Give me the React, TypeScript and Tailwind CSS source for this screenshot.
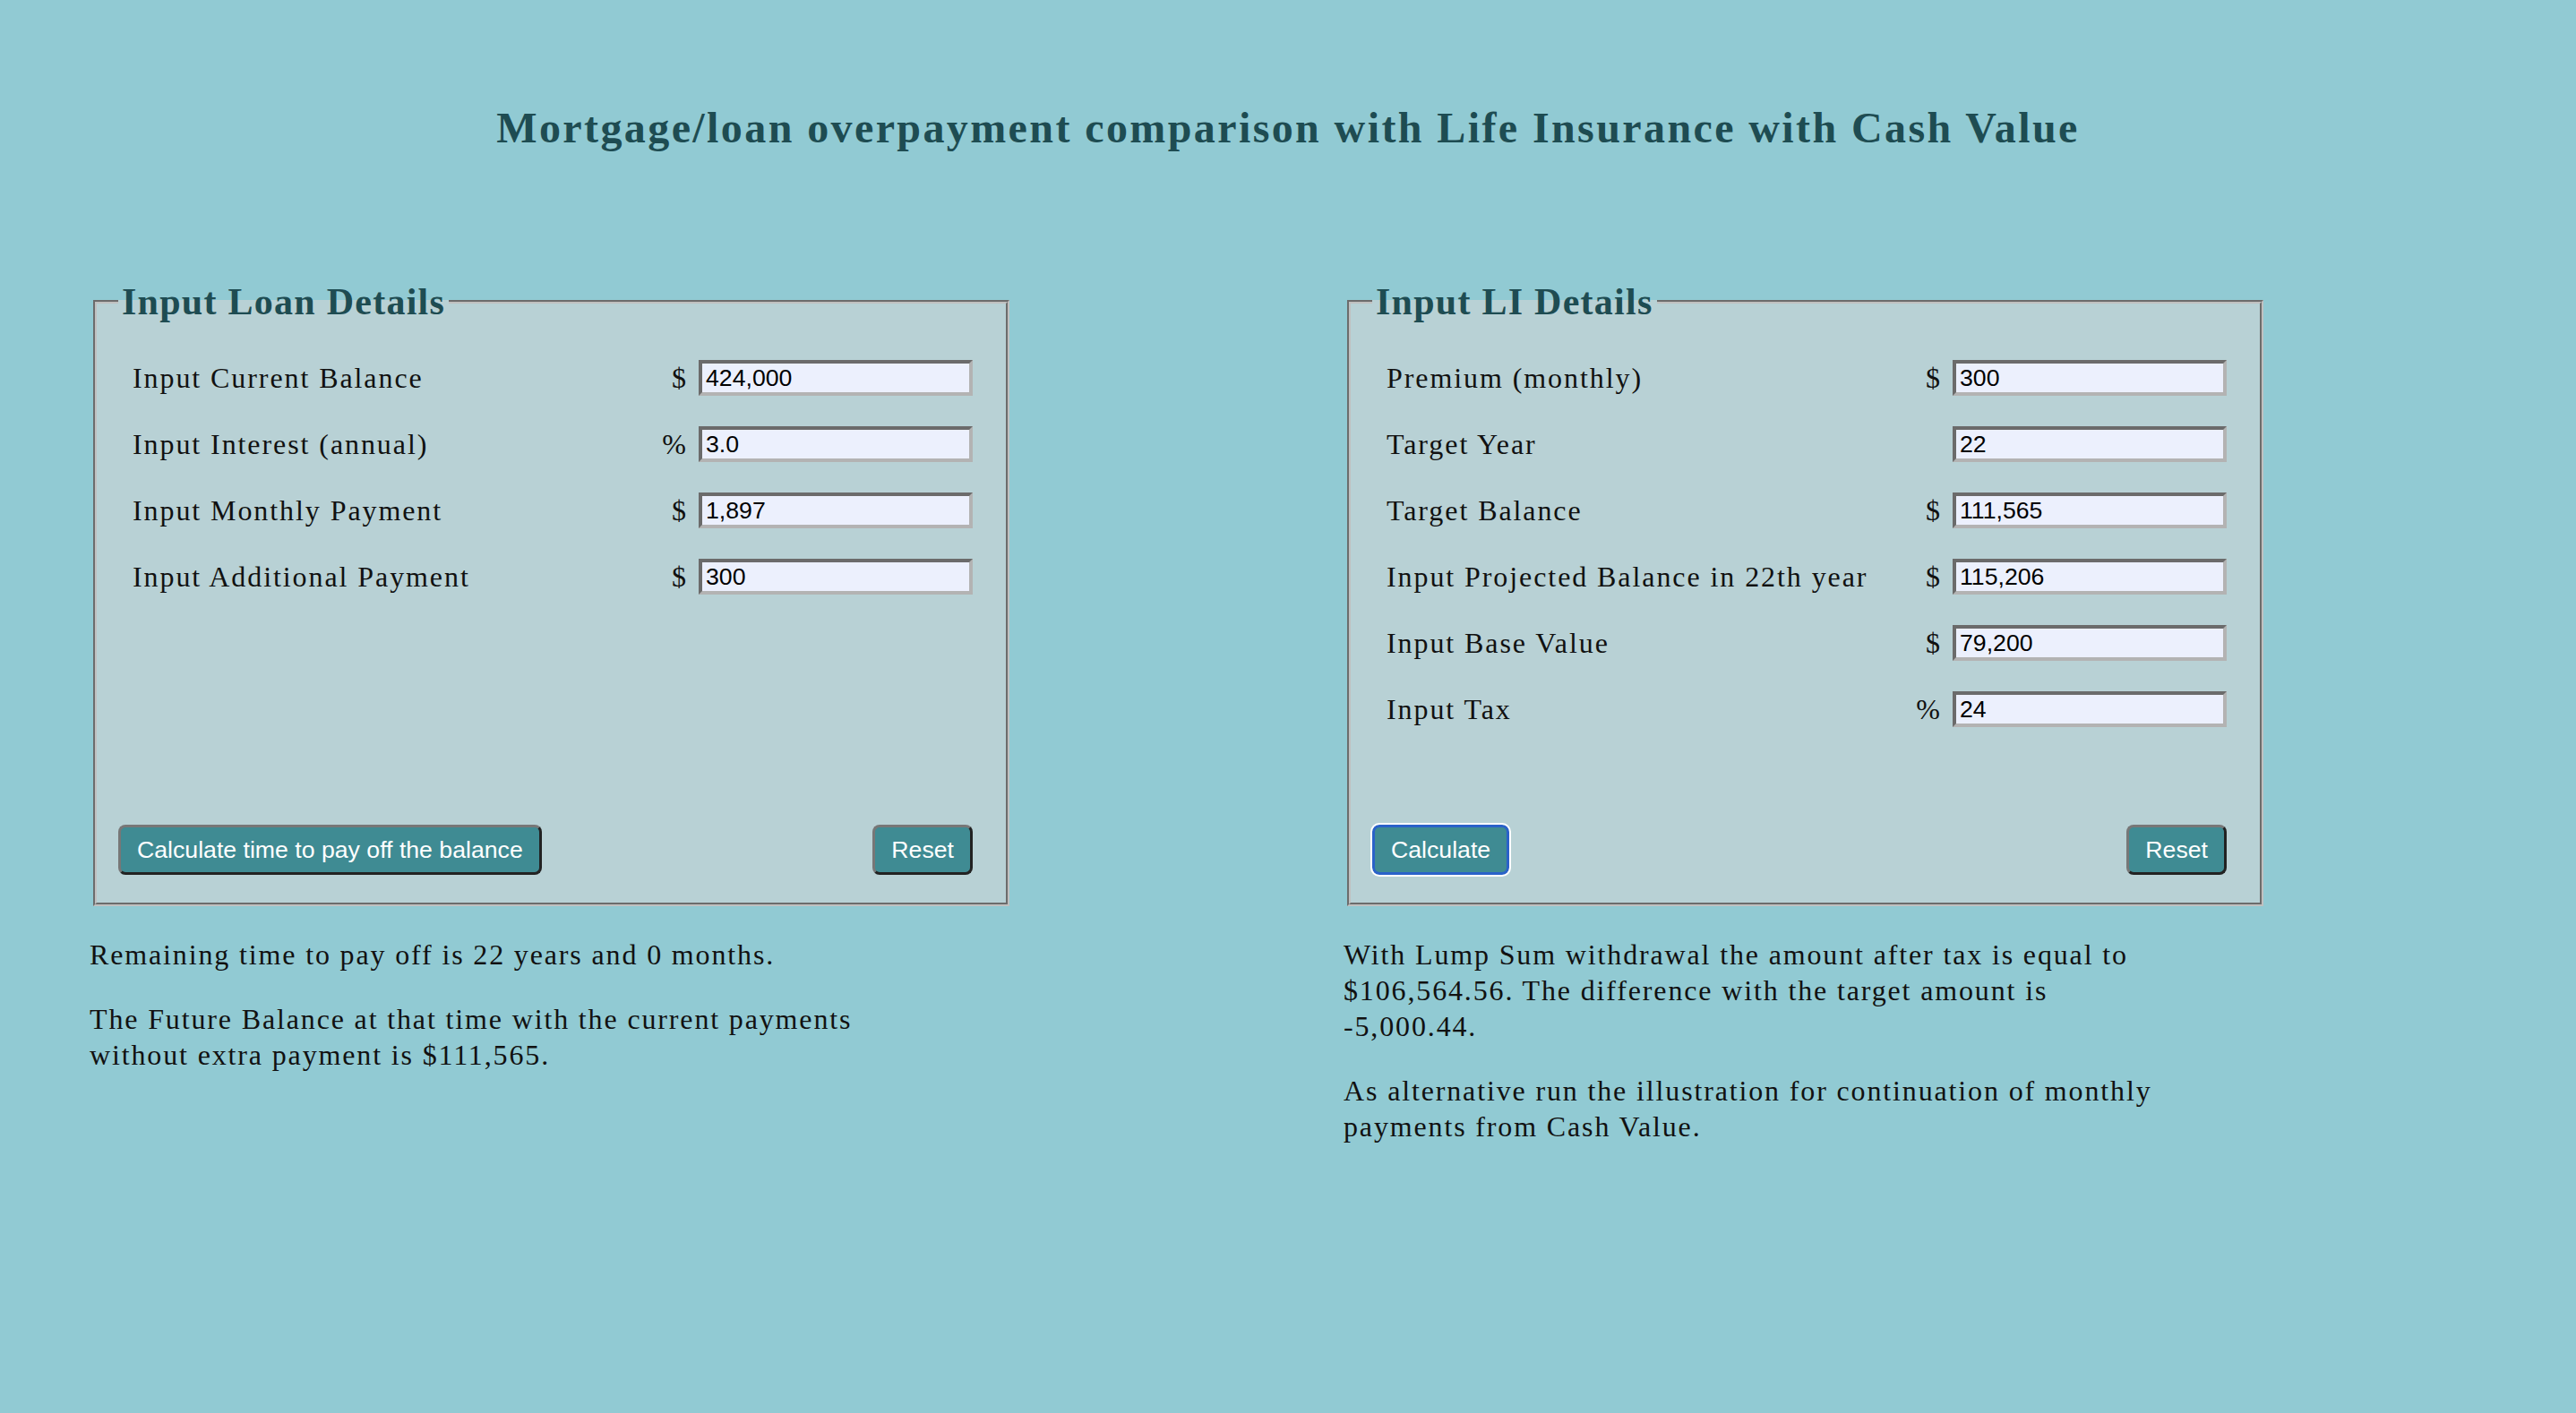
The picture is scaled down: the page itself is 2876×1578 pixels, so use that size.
import React from 'react';

type Row = {
  label: string;
  unit?: string;
  value: string;
};

const loanRows: Row[] = [
  { label: 'Input Current Balance', unit: '$', value: '424,000' },
  { label: 'Input Interest (annual)', unit: '%', value: '3.0' },
  { label: 'Input Monthly Payment', unit: '$', value: '1,897' },
  { label: 'Input Additional Payment', unit: '$', value: '300' },
];

const liRows: Row[] = [
  { label: 'Premium (monthly)', unit: '$', value: '300' },
  { label: 'Target Year', value: '22' },
  { label: 'Target Balance', unit: '$', value: '111,565' },
  { label: 'Input Projected Balance in 22th year', unit: '$', value: '115,206' },
  { label: 'Input Base Value', unit: '$', value: '79,200' },
  { label: 'Input Tax', unit: '%', value: '24' },
];

const serif = "font-['Liberation_Serif',serif]";
const sans = "font-['Liberation_Sans',Arial,sans-serif]";

const FieldRow = ({ label, unit, value }: Row) => (
  <div className="flex items-center h-[40px] pl-[16px] pr-[13px]">
    <label className={`flex-1 ${serif} text-[32px] leading-[40px] tracking-[0.06em] text-[#111]`}>
      {label}
    </label>
    <span className={`w-[40px] text-right ${serif} text-[32px] leading-[40px] text-[#111]`}>
      {unit}
    </span>
    <input
      type="text"
      defaultValue={value}
      className={`ml-[14px] w-[306px] h-[40px] px-[4px] ${sans} text-[26.67px] text-black bg-[#ecf0fd] border-[4px] border-solid border-t-[#6b6b6b] border-l-[#6b6b6b] border-b-[#b3b3b3] border-r-[#b3b3b3] outline-none`}
    />
  </div>
);

const Btn = ({ children, focused }: { children: React.ReactNode; focused?: boolean }) => (
  <button
    type="button"
    className={`h-[56px] px-[18px] rounded-[8px] bg-[#3f8b93] text-white ${sans} text-[26.67px] border-[3px] border-solid ${
      focused
        ? 'border-[#2a62c9] outline-[2px] outline-solid outline-white'
        : 'border-t-[#777] border-l-[#777] border-b-[#222] border-r-[#222]'
    }`}
  >
    {children}
  </button>
);

const Panel = ({
  title,
  rows,
  action,
  focused,
}: {
  title: string;
  rows: Row[];
  action: string;
  focused?: boolean;
}) => (
  <fieldset className="ml-[4px] w-[1023px] bg-[#b8d1d5] border-[4px] border-[#c0c0c0] [border-style:groove] pl-[24px] pr-[24px] pb-[31px]">
    <legend className={`px-[4px] ${serif} text-[42px] leading-[54px] tracking-[0.03em] font-semibold text-[#1e4c52]`}>
      {title}
    </legend>
    <div className="flex flex-col h-[613px] pt-[38px]">
      <div className="flex flex-col gap-[34px]">
        {rows.map((row) => (
          <FieldRow key={row.label} {...row} />
        ))}
      </div>
      <div className="mt-auto flex items-center justify-between pr-[13px]">
        <Btn focused={focused}>{action}</Btn>
        <Btn>Reset</Btn>
      </div>
    </div>
  </fieldset>
);

const Para = ({ children }: { children: React.ReactNode }) => (
  <p className={`${serif} text-[32px] leading-[40px] tracking-[0.058em] text-[#111]`}>{children}</p>
);

export default function App() {
  return (
    <div className="min-h-[1578px] w-full bg-[#91cad3]">
      <h1
        className={`pt-[114px] text-center ${serif} text-[48px] leading-[58px] font-semibold tracking-[0.05em] text-[#1e4c52]`}
      >
        Mortgage/loan overpayment comparison with Life Insurance with Cash Value
      </h1>

      <div className="mt-[138px] pl-[100px] flex">
        <div className="w-[1400px] shrink-0">
          <Panel title="Input Loan Details" rows={loanRows} action="Calculate time to pay off the balance" />
          <div className="mt-[34px] flex flex-col gap-[32px]">
            <Para>Remaining time to pay off is 22 years and 0 months.</Para>
            <Para>
              The Future Balance at that time with the current payments
              <br />
              without extra payment is $111,565.
            </Para>
          </div>
        </div>

        <div className="w-[1400px] shrink-0">
          <Panel title="Input LI Details" rows={liRows} action="Calculate" focused />
          <div className="mt-[34px] flex flex-col gap-[32px]">
            <Para>
              With Lump Sum withdrawal the amount after tax is equal to
              <br />
              $106,564.56. The difference with the target amount is
              <br />
              -5,000.44.
            </Para>
            <Para>
              As alternative run the illustration for continuation of monthly
              <br />
              payments from Cash Value.
            </Para>
          </div>
        </div>
      </div>
    </div>
  );
}
